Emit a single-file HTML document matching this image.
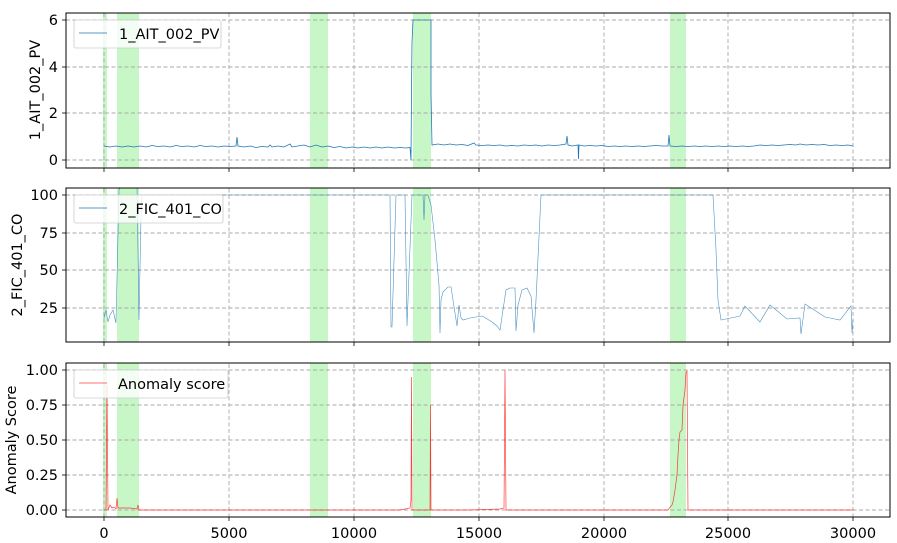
<!DOCTYPE html>
<html><head><meta charset="utf-8"><style>
html,body{margin:0;padding:0;background:#fff;width:897px;height:543px;overflow:hidden}
svg{display:block}
text{font-family:"DejaVu Sans","Liberation Sans",sans-serif;font-size:14.5px;fill:#000}
</style></head><body>
<svg width="897" height="543" viewBox="0 0 897 543" xmlns="http://www.w3.org/2000/svg">
<defs>
<g id="vgrid" stroke="#a8a8a8" stroke-width="0.9" stroke-dasharray="4,2.5">
<line x1="104" y1="0" x2="104" y2="1000"/><line x1="229" y1="0" x2="229" y2="1000"/><line x1="354" y1="0" x2="354" y2="1000"/><line x1="479" y1="0" x2="479" y2="1000"/><line x1="604" y1="0" x2="604" y2="1000"/><line x1="728" y1="0" x2="728" y2="1000"/><line x1="853" y1="0" x2="853" y2="1000"/>
</g>
<clipPath id="c1"><rect x="66" y="13" width="824" height="155"/></clipPath>
<clipPath id="c2"><rect x="66" y="188" width="824" height="154"/></clipPath>
<clipPath id="c3"><rect x="66" y="363" width="824" height="154"/></clipPath>
<g id="spans" fill="#90ee90" fill-opacity="0.5">
<rect x="103" y="0" width="4" height="1000"/><rect x="117" y="0" width="22" height="1000"/><rect x="310" y="0" width="18" height="1000"/><rect x="413" y="0" width="18" height="1000"/><rect x="670" y="0" width="16" height="1000"/>
</g>
</defs>

<!-- Axes 1 -->
<g clip-path="url(#c1)">
<use href="#spans"/>
<use href="#vgrid"/>
<g stroke="#a8a8a8" stroke-width="0.9" stroke-dasharray="4,2.5">
<line x1="66" y1="20" x2="890" y2="20"/><line x1="66" y1="67" x2="890" y2="67"/><line x1="66" y1="113" x2="890" y2="113"/><line x1="66" y1="160" x2="890" y2="160"/>
</g>
<polyline fill="none" stroke="#1f77b4" stroke-width="0.8" points="104,146 110,147 116,146 122,147 128,146 134,147 140,146 146,147 152,145.5 158,146.5 164,146 170,147 176,145.5 182,146.5 188,146 194,147 200,145.5 206,146.5 212,146 218,147 224,146 230,146.5 236,146 237,137 238,146 244,147 250,146 256,147.5 262,146.5 268,147 270,145 272,147 278,146 284,147 290,144 292,147 298,146 304,145 310,147 316,145 322,147 328,146 334,147.5 340,146.5 346,148 352,147 358,148 364,147 370,148 376,147 382,148 388,147 394,148 400,147.5 406,148 410,147.5 411,160 411.5,90 412,43 413,20 431,20 431,94 432,145 438,144 444,145 450,144 456,145 462,144.5 468,145.5 474,143 476,145 482,145.5 488,145 494,145.5 500,145 506,146 512,145.5 518,146 524,145 530,145.5 536,145 542,146 548,145 554,145.5 560,145 566,144 567,136 568,145 572,146 578,145 578.5,159 579,145 584,146 590,145.5 596,146 602,145.5 608,146.5 614,146 620,146.5 626,146 632,146.5 638,146 644,146.5 650,146 656,145.5 662,146 668,146 669,135 670,146 676,146.5 682,146 688,146.5 694,146 700,146.5 706,146 712,146.5 718,146 724,146.5 730,146 736,146.5 742,146 748,146.5 754,146 760,145 766,145.5 772,145 778,145.5 784,145 790,144.5 796,145 800,144 806,145 812,144.5 818,145 824,144.5 830,145.5 836,145 842,145.5 848,145 853,146"/>
</g>
<rect x="66" y="13" width="824" height="155" fill="none" stroke="#000" stroke-width="1"/>
<g stroke="#000" stroke-width="0.8">
<line x1="62" y1="20" x2="66" y2="20"/><line x1="62" y1="67" x2="66" y2="67"/><line x1="62" y1="113" x2="66" y2="113"/><line x1="62" y1="160" x2="66" y2="160"/>
<line x1="104" y1="168" x2="104" y2="172"/><line x1="229" y1="168" x2="229" y2="172"/><line x1="354" y1="168" x2="354" y2="172"/><line x1="479" y1="168" x2="479" y2="172"/><line x1="604" y1="168" x2="604" y2="172"/><line x1="728" y1="168" x2="728" y2="172"/><line x1="853" y1="168" x2="853" y2="172"/>
</g>
<g text-anchor="end"><text x="58" y="25">6</text><text x="58" y="72">4</text><text x="58" y="118">2</text><text x="58" y="165">0</text></g>
<text transform="translate(40,90) rotate(-90)" text-anchor="middle">1_AIT_002_PV</text>
<rect x="74" y="20" width="147" height="28" rx="2" fill="#fff" fill-opacity="0.8" stroke="#ccc" stroke-width="0.8"/>
<line x1="79" y1="33" x2="107" y2="33" stroke="#1f77b4" stroke-width="0.7"/>
<text x="119" y="39">1_AIT_002_PV</text>

<!-- Axes 2 -->
<g clip-path="url(#c2)">
<use href="#spans"/>
<use href="#vgrid"/>
<g stroke="#a8a8a8" stroke-width="0.9" stroke-dasharray="4,2.5">
<line x1="66" y1="195" x2="890" y2="195"/><line x1="66" y1="233" x2="890" y2="233"/><line x1="66" y1="270" x2="890" y2="270"/><line x1="66" y1="308" x2="890" y2="308"/>
</g>
<polyline fill="none" stroke="#1f77b4" stroke-width="0.6" stroke-opacity="0.8" points="104,318 106,310 108,322 110,315 113,310 116,323 119,190 121,185 137,185 139,320 141,215 142,195 160,195 390,195 391,327 392,327 396,195 405,195 407,326 408,300 412,195 423,195 424,220 425,195 428,195 431,205 435,240 439,285 440,333 441,300 443,292 448,287 451,287 457,326 459,305 461,318 463,320 470,318 482,316 484,317 492,322 497,326 500,330 503,310 506,290 510,288 515,288 516,331 518,305 522,290 527,288 531,296 534,333 536,300 541,195 560,195 713,195 716,250 718,300 721,320 726,319 740,316 745,306 760,322 770,305 787,319 800,318 801,334 805,304 825,317 840,320 851,306 852,333 853,320"/>
</g>
<rect x="66" y="188" width="824" height="154" fill="none" stroke="#000" stroke-width="1"/>
<g stroke="#000" stroke-width="0.8">
<line x1="62" y1="195" x2="66" y2="195"/><line x1="62" y1="233" x2="66" y2="233"/><line x1="62" y1="270" x2="66" y2="270"/><line x1="62" y1="308" x2="66" y2="308"/>
<line x1="104" y1="342" x2="104" y2="346"/><line x1="229" y1="342" x2="229" y2="346"/><line x1="354" y1="342" x2="354" y2="346"/><line x1="479" y1="342" x2="479" y2="346"/><line x1="604" y1="342" x2="604" y2="346"/><line x1="728" y1="342" x2="728" y2="346"/><line x1="853" y1="342" x2="853" y2="346"/>
</g>
<g text-anchor="end"><text x="58" y="200">100</text><text x="58" y="238">75</text><text x="58" y="275">50</text><text x="58" y="313">25</text></g>
<text transform="translate(22,265) rotate(-90)" text-anchor="middle">2_FIC_401_CO</text>
<rect x="74" y="195" width="149" height="28" rx="2" fill="#fff" fill-opacity="0.8" stroke="#ccc" stroke-width="0.8"/>
<line x1="79" y1="208" x2="107" y2="208" stroke="#1f77b4" stroke-width="0.7"/>
<text x="119" y="214">2_FIC_401_CO</text>

<!-- Axes 3 -->
<g clip-path="url(#c3)">
<use href="#spans"/>
<use href="#vgrid"/>
<g stroke="#a8a8a8" stroke-width="0.9" stroke-dasharray="4,2.5">
<line x1="66" y1="370" x2="890" y2="370"/><line x1="66" y1="405" x2="890" y2="405"/><line x1="66" y1="440" x2="890" y2="440"/><line x1="66" y1="475" x2="890" y2="475"/><line x1="66" y1="510" x2="890" y2="510"/>
</g>
<polyline fill="none" stroke="#ff0000" stroke-width="0.7" stroke-opacity="0.75" points="104,510 106,510 107,385 108,510 110,505 112,508 114,507 116,509 117,498 118,508 130,508 137,509 138,505 139,510 200,510 260,510 300,510 400,510 410,508 411,500 411.5,377 412,510 430,510 430.5,405 431,510 470,510 500,509 504,508 505,370 506,510 600,510 668,510 672,505 673,502 675,490 677,475 678,455 679,440 680,432 682,430 683,405 685,390 686,372 687,371 688,510 750,510 853,510"/>
</g>
<rect x="66" y="363" width="824" height="154" fill="none" stroke="#000" stroke-width="1"/>
<g stroke="#000" stroke-width="0.8">
<line x1="62" y1="370" x2="66" y2="370"/><line x1="62" y1="405" x2="66" y2="405"/><line x1="62" y1="440" x2="66" y2="440"/><line x1="62" y1="475" x2="66" y2="475"/><line x1="62" y1="510" x2="66" y2="510"/>
<line x1="104" y1="517" x2="104" y2="521"/><line x1="229" y1="517" x2="229" y2="521"/><line x1="354" y1="517" x2="354" y2="521"/><line x1="479" y1="517" x2="479" y2="521"/><line x1="604" y1="517" x2="604" y2="521"/><line x1="728" y1="517" x2="728" y2="521"/><line x1="853" y1="517" x2="853" y2="521"/>
</g>
<g text-anchor="end"><text x="58" y="375">1.00</text><text x="58" y="410">0.75</text><text x="58" y="445">0.50</text><text x="58" y="480">0.25</text><text x="58" y="515">0.00</text></g>
<text transform="translate(16,440) rotate(-90)" text-anchor="middle">Anomaly Score</text>
<rect x="74" y="370" width="154" height="28" rx="2" fill="#fff" fill-opacity="0.8" stroke="#ccc" stroke-width="0.8"/>
<line x1="79" y1="383" x2="107" y2="383" stroke="#ff0000" stroke-width="0.7" stroke-opacity="0.75"/>
<text x="118" y="389">Anomaly score</text>
<g text-anchor="middle"><text x="104" y="538">0</text><text x="229" y="538">5000</text><text x="354" y="538">10000</text><text x="479" y="538">15000</text><text x="604" y="538">20000</text><text x="728" y="538">25000</text><text x="853" y="538">30000</text></g>
</svg>
</body></html>
